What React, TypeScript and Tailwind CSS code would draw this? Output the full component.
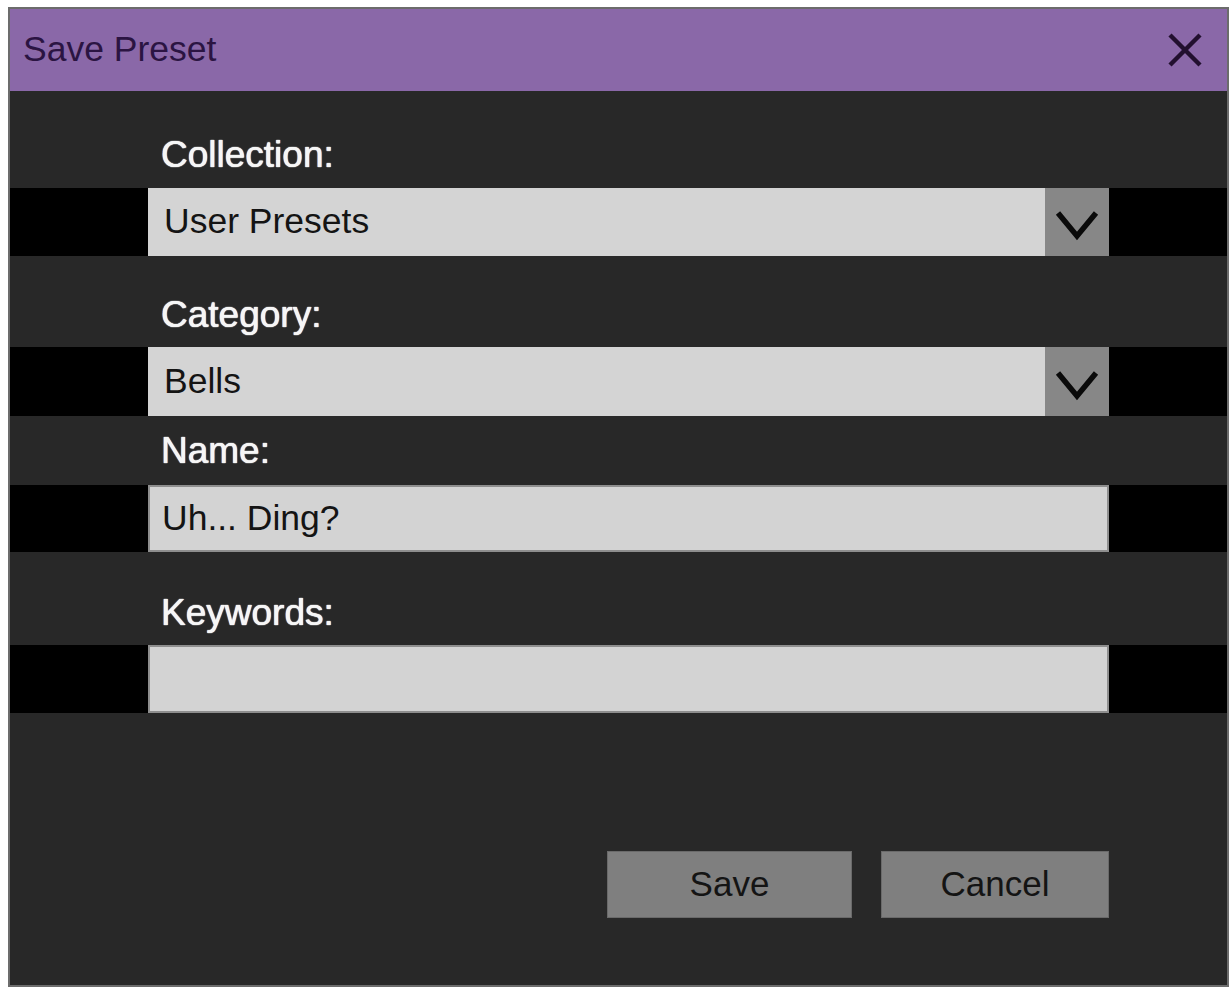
import React from "react";

const font = "font-['Liberation_Sans',Arial,Helvetica,sans-serif]";

function Label({ text, mt }: { text: string; mt: string }) {
  return (
    <div
      className={`${mt} h-[40px] leading-[40px] pl-[151px] text-[37px] text-[#f6f6f6] [text-shadow:0_0_1px_#ffffff,0_0_1px_#ffffff]`}
    >
      {text}
    </div>
  );
}

function Chevron() {
  return (
    <svg width="64" height="68" viewBox="0 0 64 68" className="block">
      <polyline
        points="13,25 32,48 51,25"
        fill="none"
        stroke="#0a0a0a"
        strokeWidth="5.5"
        strokeLinejoin="miter"
      />
    </svg>
  );
}

function DropRow({ value, mt, h }: { value: string; mt: string; h: string }) {
  return (
    <div className={`${mt} ${h} bg-black flex pl-[138px]`}>
      <div className="w-[897px] h-full bg-[#d4d4d4] flex items-center pl-[16px] text-[35.5px] text-[#141414]">
        {value}
      </div>
      <div className="w-[64px] h-full bg-[#878787] flex items-center justify-center">
        <Chevron />
      </div>
    </div>
  );
}

function TextRow({ value, mt, h }: { value: string; mt: string; h: string }) {
  return (
    <div className={`${mt} ${h} bg-black flex pl-[138px]`}>
      <div className="w-[961px] h-full bg-[#d3d3d3] border-2 border-[#8e8e8e] flex items-center pl-[12px] text-[35.5px] text-[#141414]">
        {value}
      </div>
    </div>
  );
}

export default function App() {
  return (
    <div className={`w-[1231px] h-[990px] bg-white pt-[7px] pl-[8px] ${font}`}>
      <div className="w-[1221px] h-[980px] border-2 border-[#6c6c6c] bg-[#282828] flex flex-col">
        <div className="h-[82px] shrink-0 bg-[#8a68a8] flex items-center justify-between pl-[13px] pr-[24px]">
          <span className="text-[35.5px] text-[#2b1442]">Save Preset</span>
          <svg width="36" height="36" viewBox="0 0 36 36" className="block">
            <line x1="3" y1="3" x2="33" y2="33" stroke="#22102f" strokeWidth="4.5" />
            <line x1="33" y1="3" x2="3" y2="33" stroke="#22102f" strokeWidth="4.5" />
          </svg>
        </div>
        <div className="flex flex-col">
          <Label text="Collection:" mt="mt-[44px]" />
          <DropRow value="User Presets" mt="mt-[13px]" h="h-[68px]" />
          <Label text="Category:" mt="mt-[39px]" />
          <DropRow value="Bells" mt="mt-[12px]" h="h-[69px]" />
          <Label text="Name:" mt="mt-[15px]" />
          <TextRow value="Uh... Ding?" mt="mt-[14px]" h="h-[67px]" />
          <Label text="Keywords:" mt="mt-[41px]" />
          <TextRow value="" mt="mt-[12px]" h="h-[68px]" />
          <div className="mt-[138px] h-[67px] flex justify-end pr-[118px] gap-[29px]">
            <button className="w-[245px] h-full bg-[#7f7f7f] border border-[#6a6a6a] text-[35px] text-[#141414]">
              Save
            </button>
            <button className="w-[228px] h-full bg-[#7f7f7f] border border-[#6a6a6a] text-[35px] text-[#141414]">
              Cancel
            </button>
          </div>
        </div>
      </div>
    </div>
  );
}
